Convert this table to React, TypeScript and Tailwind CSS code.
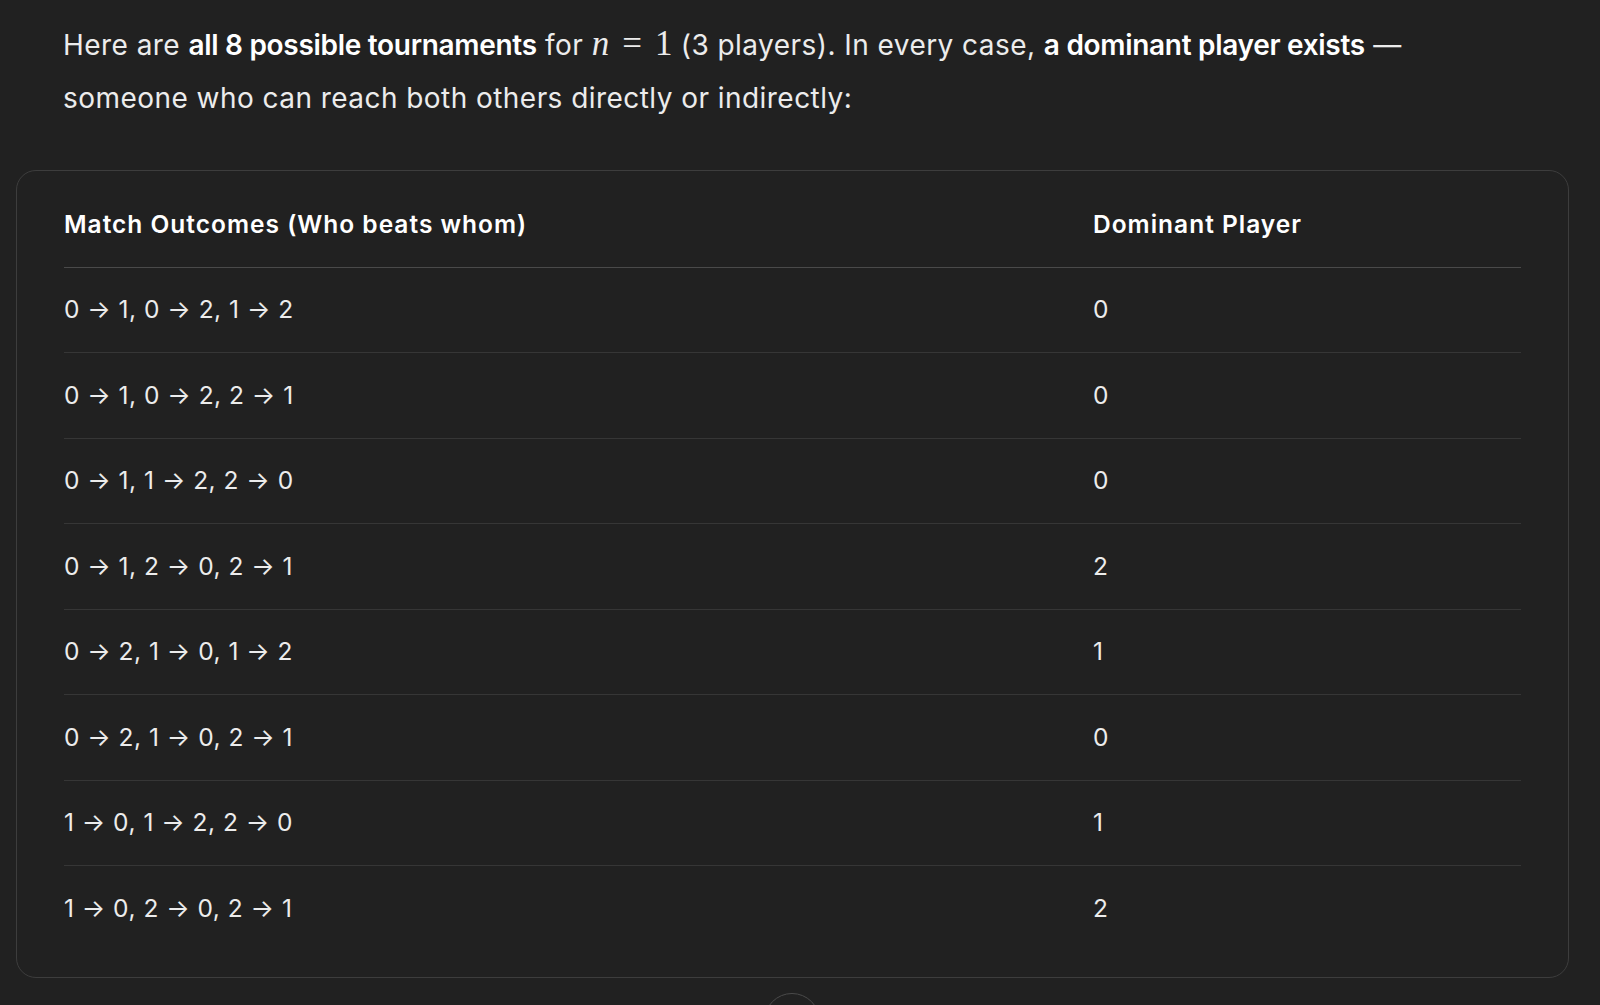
import React from 'react';

const rows: [string, string][] = [
  ['0 → 1, 0 → 2, 1 → 2', '0'],
  ['0 → 1, 0 → 2, 2 → 1', '0'],
  ['0 → 1, 1 → 2, 2 → 0', '0'],
  ['0 → 1, 2 → 0, 2 → 1', '2'],
  ['0 → 2, 1 → 0, 1 → 2', '1'],
  ['0 → 2, 1 → 0, 2 → 1', '0'],
  ['1 → 0, 1 → 2, 2 → 0', '1'],
  ['1 → 0, 2 → 0, 2 → 1', '2'],
];

export default function App() {
  return (
    <div
      className="relative h-[1005px] w-[1600px] overflow-hidden bg-[#212121] text-[#ececec]"
      style={{ fontFamily: 'Inter, "Noto Sans", sans-serif' }}
    >
      <div className="pl-[16px] pr-[31px] pt-[17px]">
        <p className="w-[1420px] pl-[47px] text-[28px] leading-[53px] tracking-[0.45px]">
          Here are{' '}
          <strong className="font-semibold tracking-[-0.3px] text-white">all 8 possible tournaments</strong> for{' '}
          <span className="text-[35px] tracking-normal" style={{ fontFamily: '"Liberation Serif", "DejaVu Serif", serif' }}>
            <i>n</i>
            <span className="mx-[13px]">=</span>1
          </span>{' '}
          (3 players). In every case,{' '}
          <strong className="font-semibold tracking-[-0.3px] text-white">a dominant player exists</strong> — someone who
          can reach both others directly or indirectly:
        </p>

        <div className="mt-[45px] rounded-[20px] border border-[#3d3d3d] px-[47px] pb-[26px] pt-[11px]">
          <table className="w-full border-collapse text-left">
            <thead>
              <tr className="border-b border-[#4a4a4a]">
                <th className="h-[85px] w-[1029px] text-[24.5px] font-semibold tracking-[1px] text-white">
                  Match Outcomes (Who beats whom)
                </th>
                <th className="h-[85px] text-[24.5px] font-semibold tracking-[1px] text-white">Dominant Player</th>
              </tr>
            </thead>
            <tbody>
              {rows.map(([m, d], i) => (
                <tr key={i} className={i < rows.length - 1 ? 'border-b border-[#363636]' : ''}>
                  <td className="h-[85.5px] text-[24.5px] tracking-[0.5px]">{m}</td>
                  <td className="h-[85.5px] text-[24.5px] tracking-[0.5px]">{d}</td>
                </tr>
              ))}
            </tbody>
          </table>
        </div>
      </div>

      {/* scroll-down button, mostly below the fold */}
      <div className="absolute left-[764px] top-[993px] h-[56px] w-[56px] rounded-full border border-[#4a4a4a] bg-[#212121]" />
    </div>
  );
}
